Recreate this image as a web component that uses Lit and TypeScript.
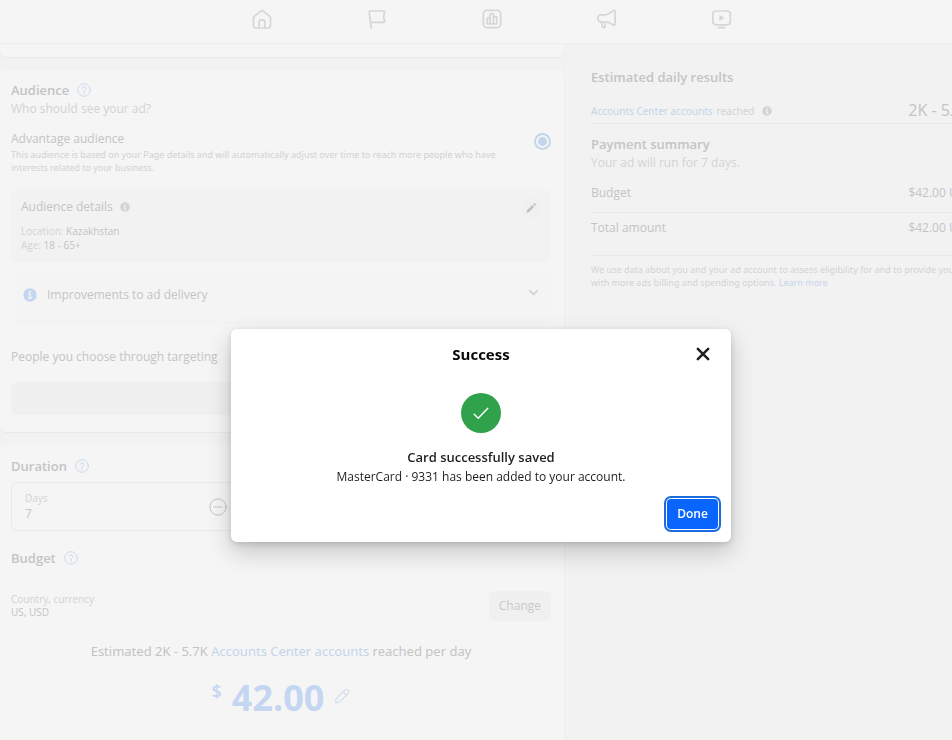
import { LitElement, html, css, svg } from "lit";
import { customElement, property, state } from "lit/decorators.js";

const paths: Record<string, unknown> = {
  home: svg`<path d="M1.5 8.2 L8.6 2.2 Q10 1 11.4 2.2 L18.5 8.2 V16.5 Q18.5 19 16 19 H4 Q1.5 19 1.5 16.5 Z M7.2 19 V13 Q7.2 10.8 9.2 10.8 H10.8 Q12.8 10.8 12.8 13 V19"/>`,
  flag: svg`<path d="M4.2 19 L2.2 3.4 Q2 2 3.4 2 H16.6 Q17.8 2 17.5 3.2 L16.6 8 L17.6 12 Q17.9 13.4 16.6 13.4 H3.5"/>`,
  chart: svg`<rect x="1.3" y="1.3" width="17.4" height="17.4" rx="3.6"/><path d="M5.2 15 V9.8 Q5.2 8.9 6.1 8.9 H8 V15 Z M8 15 V6 Q8 4.6 9.2 4.6 H10.2 Q11.5 4.6 11.5 6 V15 Z M11.5 7.6 H13.6 Q14.8 7.6 14.8 8.8 V15 H11.5"/>`,
  horn: svg`<path d="M16.7 1.6 Q18.1 1 18.1 2.6 V15 Q18.1 16.6 16.7 16 L11 13.2 H4 Q0.9 13 0.9 9.6 Q0.9 6 4.1 5.8 H8.1 Q9.7 5.8 11.1 4.9 Z M4.3 13.2 L5.5 17.6 Q5.8 18.8 7.1 18.6 Q8.4 18.4 8.2 17 L7.9 13.2"/>`,
  video: svg`<rect x="0.9" y="2" width="17.4" height="13.8" rx="3.2"/><path d="M6.2 18.6 H13"/><path class="solid" d="M7.4 5.8 L12.4 8.9 L7.4 12 Z"/>`,
  help: svg`<circle cx="10" cy="10" r="9"/><path d="M7.2 7.8 Q7.4 5.4 10 5.4 Q12.8 5.5 12.8 7.9 Q12.7 9.3 11.2 10 Q10 10.6 10 12.2"/><circle class="dot" cx="10" cy="14.6" r="1"/>`,
  info: svg`<circle class="solid" cx="10" cy="10" r="9.5"/><path class="cut" d="M8 9 H10.3 V14 M7.8 14.3 H12.4"/><circle class="cutdot" cx="10" cy="5.6" r="1.5"/>`,
  pencil: svg`<path class="solid" d="M2.5 17.8 L3.2 13.6 L12 4.8 L15.3 8.1 L6.6 16.9 Z M13.4 3.5 L14.6 2.3 Q16 1.2 17.2 2.5 Q18.8 4 17.7 5.5 L16.6 6.7 Z"/>`,
  edit: svg`<path d="M2 18.5 L2.6 13.4 L13.6 2.6 Q15.6 1 17.5 2.6 Q19.2 4.6 17.6 6.7 L7 17.5 Z M11.6 4.8 L15.6 8.8"/>`,
  chevron: svg`<path d="M3 6.5 L10 13.5 L17 6.5"/>`,
  minus: svg`<circle cx="10" cy="10" r="9"/><path d="M5.5 10 H14.5"/>`,
  check: svg`<path d="M1.5 11.5 L6.5 16.5 L18.5 4"/>`,
  close: svg`<path d="M2.6 2.6 L17.4 17.4 M17.4 2.6 L2.6 17.4"/>`,
};

@customElement("ui-icon")
class UiIcon extends LitElement {
  @property() name = "home";
  static styles = css`
    :host { display: block; flex: none; width: 20px; height: 20px; }
    svg { display: block; width: 100%; height: 100%; fill: none; stroke: currentColor;
      stroke-width: var(--stroke, 1.7); stroke-linecap: round; stroke-linejoin: round; }
    .solid { fill: currentColor; }
    .info .solid, .pencil .solid, .video .solid { stroke: none; }
    .dot { fill: currentColor; stroke: none; }
    .cut { stroke: #f5f5f5; stroke-width: 2; }
    .cutdot { fill: #f5f5f5; stroke: none; }
  `;
  render() {
    return html`<svg class=${this.name} viewBox="0 0 20 20" aria-hidden="true">${paths[this.name]}</svg>`;
  }
}

@customElement("app-root")
class AppRoot extends LitElement {
  @state() private open = true;

  static styles = css`
    :host { display: block; min-height: 100vh; overflow: hidden; background: #f2f2f2;
      font-family: "Open Sans", "Noto Sans", sans-serif; font-size: 12px; line-height: 18px; color: #c4c4c4; }
    * { box-sizing: border-box; }
    h1, h2, h3, p, dl, dd, dt { margin: 0; font: inherit; }
    a { color: #c3d5ea; text-decoration: none; }
    button, input { font: inherit; color: inherit; border: 0; padding: 0; margin: 0; background: none; }
    .page { min-width: 983px; min-height: 100vh; display: flex; flex-direction: column; }
    .topbar { height: 44px; display: flex; justify-content: center; align-items: flex-start; gap: 95px;
      padding-top: 9px; background: #f5f5f5; border-bottom: 1px solid #eeeeee; }
    .topbar a { color: #d6d6d6; }
    .columns { flex: 1; display: grid; grid-template-columns: 564px minmax(0, 1fr); }
    .main { display: flex; flex-direction: column; gap: 13px; }
    .card { background: #f5f5f5; border-radius: 6px; box-shadow: 0 1px 1px #e9e9e9; padding: 11px 13px 0 11px; }
    .stub { height: 13px; padding: 0; border-radius: 0 0 6px 6px; }
    .audience { padding-bottom: 17px; }
    .plan { flex: 1; border-radius: 6px 6px 0 0; padding-top: 12px; }
    .title { display: flex; align-items: center; gap: 8px; font-size: 13px; font-weight: 600; }
    .help { --stroke: 1.2; width: 14px; height: 14px; color: #c3d5ea; }
    .info { width: 10px; height: 10px; color: #d3d3d3; }
    .muted { color: #d2d2d2; }
    .sub { color: #d2d2d2; line-height: 20px; }
    .strong { font-weight: 500; }
    .small { font-family: "Noto Sans", "Open Sans", sans-serif; font-size: 9px; line-height: 13px; color: #d2d2d2; }
    .tiny { font-size: 10px; line-height: 14px; }
    .option { display: flex; justify-content: space-between; align-items: flex-start; margin: 11px 0 15px; }
    .option label { flex: 0 1 516px; }
    .option label span { display: block; }
    .radio { appearance: none; width: 17px; height: 17px; margin-top: 3px; border-radius: 50%;
      border: 2px solid #c3d5ea; background: radial-gradient(circle, #c3d5ea 4px, #f5f5f5 5px); }
    .details { background: #f2f2f2; border-radius: 6px; padding: 9px 10px; display: flex;
      justify-content: space-between; align-items: flex-start; height: 73px; }
    .details .lines { margin-top: 8px; }
    .label { display: flex; align-items: center; gap: 7px; font-weight: 500; }
    .round { width: 20px; height: 20px; border-radius: 50%; background: #f0f0f0; display: grid; place-items: center; }
    .round ui-icon { width: 12px; height: 12px; color: #c2c2c2; }
    .accordion { width: 100%; height: 50px; margin: 10px 0 0; padding: 0 12px 4px; border-radius: 6px; display: flex;
      align-items: center; gap: 10px; background: #f4f4f4; box-shadow: 0 1px 1px #f1f1f1; text-align: left; font-weight: 500; }
    .accordion .grow { flex: 1; }
    .accordion .info { width: 14px; height: 14px; color: #c3d5f0; }
    .accordion .chev { --stroke: 3.2; width: 11px; height: 11px; margin-bottom: 6px; color: #d3d3d3; }
    .people { margin: 26px 0 16px; font-weight: 500; }
    .bar { display: block; width: 100%; height: 33px; border-radius: 6px; background: #f0f0f0; }
    .field { margin-top: 7px; height: 49px; border: 1px solid #e9e9e9; border-radius: 6px; display: flex;
      align-items: center; padding: 0 13px; width: 100%; }
    .field label { display: block; color: #d2d2d2; font-size: 10px; line-height: 14px; }
    .field input { display: block; width: 184px; height: 18px; outline: 0; }
    .field button ui-icon { --stroke: 1.1; width: 18px; height: 18px; }
    .budget { margin-top: 18px; }
    .currency { display: flex; justify-content: space-between; align-items: center; margin-top: 24px; }
    .currency .tiny { line-height: 13px; }
    .change { height: 30px; padding: 0 10px; border-radius: 6px; background: #f0f0f0; font-weight: 500; color: #c8c8c8; }
    .estimate { font-family: "Noto Sans", "Open Sans", sans-serif; margin-top: 21px; text-align: center; font-size: 13px; }
    .amount { margin-top: 13px; display: flex; justify-content: center; align-items: flex-start; gap: 10px;
      color: #c5d6f2; font-size: 36px; line-height: 50px; font-weight: 700; }
    .amount .sign { font-size: 18px; line-height: 36px; font-weight: 600; }
    .amount ui-icon { --stroke: 1.3; width: 16px; height: 16px; margin-top: 15px; color: #cddcee; }
    .side { border-left: 1px solid #efefef; padding: 24px 10px 0 26px; }
    .line { display: flex; justify-content: space-between; align-items: center; border-bottom: 1px solid #e8e8e8; }
    .reach { height: 38px; padding-top: 10px; margin-bottom: 11px; }
    .reach .who { display: flex; align-items: center; gap: 4px; padding-top: 3px; color: #d2d2d2;
      font-family: "Noto Sans", "Open Sans", sans-serif; font-size: 10px; }
    .reach .info { margin-left: 3px; }
    .reach .range { font-size: 16px; }
    .row { height: 40px; }
    .total { height: 43px; padding-bottom: 13px; }
    .legal { margin-top: 7px; white-space: nowrap; }
    .overlay { position: fixed; inset: 0; display: grid; place-items: center; padding: 131px 0 0 10px; }
    .dialog { width: 500px; max-width: 100%; background: #ffffff; border-radius: 6px; color: #1c1e21; text-align: center;
      box-shadow: 0 10px 24px rgba(0, 0, 0, 0.2), 0 2px 6px rgba(0, 0, 0, 0.14); padding: 13px 10px 10px; }
    .head { display: grid; grid-template-columns: 36px 1fr 36px; align-items: center; height: 24px; }
    .head h1 { grid-column: 2; font-size: 15px; font-weight: 700; color: #080809; }
    .head button { display: grid; place-items: center; height: 24px; }
    .head ui-icon { --stroke: 3.6; width: 14px; height: 14px; color: #1c1e21; }
    .badge { width: 40px; height: 40px; border-radius: 50%; background: #31a24c; color: #ffffff; display: grid;
      place-items: center; margin: 27px auto 15px; }
    .badge ui-icon { --stroke: 1.8; width: 16px; height: 16px; }
    .dialog h2 { font-size: 13px; font-weight: 600; }
    .message { line-height: 20px; padding-top: 1px; }
    .actions { display: flex; justify-content: flex-end; padding: 12px 1px 0 0; }
    .done { height: 30px; width: 51px; margin: 0 2px 3px 0; border-radius: 4px; background: #0866ff; color: #ffffff;
      font-weight: 600; box-shadow: 0 0 0 1px #ffffff, 0 0 0 3px #1b6be0; outline: 0; }
  `;

  private close() {
    this.open = false;
  }

  private help() {
    return html`<ui-icon class="help" name="help"></ui-icon>`;
  }

  render() {
    return html`
      <div class="page">
        <nav class="topbar" aria-label="Main">
          ${["home", "flag", "chart", "horn", "video"].map(
            (n) => html`<a href="#" aria-label=${n}><ui-icon name=${n}></ui-icon></a>`
          )}
        </nav>
        <div class="columns">
          <main class="main">
            <div class="card stub"></div>
            <section class="card audience">
              <h2 class="title">Audience ${this.help()}</h2>
              <p class="sub">Who should see your ad?</p>
              <div class="option">
                <label for="advantage">
                  <span class="strong">Advantage audience</span>
                  <span class="small">This audience is based on your Page details and will automatically adjust over time to reach more people who have interests related to your business.</span>
                </label>
                <input class="radio" id="advantage" type="radio" name="audience" checked />
              </div>
              <div class="details">
                <div>
                  <h3 class="label">Audience details <ui-icon class="info" name="info"></ui-icon></h3>
                  <div class="lines tiny">
                    <p><span class="muted">Location:</span> Kazakhstan</p>
                    <p><span class="muted">Age:</span> 18 - 65+</p>
                  </div>
                </div>
                <button class="round" aria-label="Edit audience"><ui-icon name="pencil"></ui-icon></button>
              </div>
              <button class="accordion">
                <ui-icon class="info" name="info"></ui-icon>
                <span class="grow">Improvements to ad delivery</span>
                <ui-icon class="chev" name="chevron"></ui-icon>
              </button>
              <h3 class="people">People you choose through targeting</h3>
              <button class="bar" aria-label="Create new"></button>
            </section>
            <section class="card plan">
              <h2 class="title">Duration ${this.help()}</h2>
              <div class="field">
                <div>
                  <label for="days">Days</label>
                  <input id="days" type="text" value="7" />
                </div>
                <button aria-label="Fewer days"><ui-icon name="minus"></ui-icon></button>
              </div>
              <h2 class="title budget">Budget ${this.help()}</h2>
              <div class="currency">
                <div class="tiny">
                  <p class="muted">Country, currency</p>
                  <p>US, USD</p>
                </div>
                <button class="change">Change</button>
              </div>
              <p class="estimate">Estimated 2K - 5.7K <a href="#">Accounts Center accounts</a> reached per day</p>
              <div class="amount">
                <span class="sign">$</span><span>42.00</span><ui-icon name="edit"></ui-icon>
              </div>
            </section>
          </main>
          <aside class="side">
            <h2 class="title">Estimated daily results</h2>
            <div class="line reach">
              <span class="who"><a href="#">Accounts Center accounts</a> <span>reached</span>
                <ui-icon class="info" name="info"></ui-icon></span>
              <span class="range">2K - 5.7K</span>
            </div>
            <h2 class="title">Payment summary</h2>
            <p class="sub">Your ad will run for 7 days.</p>
            <dl>
              <div class="line row"><dt>Budget</dt><dd>$42.00 USD</dd></div>
              <div class="line row total"><dt>Total amount</dt><dd>$42.00 USD</dd></div>
            </dl>
            <p class="small legal">We use data about you and your ad account to assess eligibility for and to provide you<br />with more ads billing and spending options. <a href="#">Learn more</a></p>
          </aside>
        </div>
      </div>
      ${this.open
        ? html`<div class="overlay">
            <div class="dialog" role="dialog" aria-modal="true" aria-labelledby="dialog-title">
              <header class="head">
                <h1 id="dialog-title">Success</h1>
                <button aria-label="Close" @click=${this.close}><ui-icon name="close"></ui-icon></button>
              </header>
              <div class="badge"><ui-icon name="check"></ui-icon></div>
              <h2>Card successfully saved</h2>
              <p class="message">MasterCard · 9331 has been added to your account.</p>
              <div class="actions"><button class="done" @click=${this.close}>Done</button></div>
            </div>
          </div>`
        : ""}
    `;
  }
}
